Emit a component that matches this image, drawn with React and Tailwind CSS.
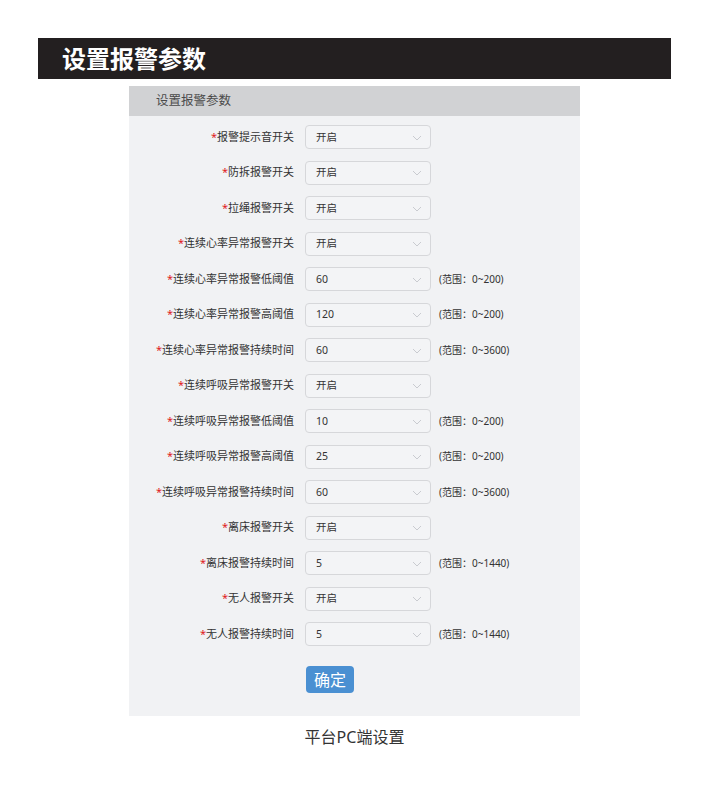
const ROWS = [
  { label: '报警提示音开关', value: '开启' },
  { label: '防拆报警开关', value: '开启' },
  { label: '拉绳报警开关', value: '开启' },
  { label: '连续心率异常报警开关', value: '开启' },
  { label: '连续心率异常报警低阈值', value: '60', range: '0~200' },
  { label: '连续心率异常报警高阈值', value: '120', range: '0~200' },
  { label: '连续心率异常报警持续时间', value: '60', range: '0~3600' },
  { label: '连续呼吸异常报警开关', value: '开启' },
  { label: '连续呼吸异常报警低阈值', value: '10', range: '0~200' },
  { label: '连续呼吸异常报警高阈值', value: '25', range: '0~200' },
  { label: '连续呼吸异常报警持续时间', value: '60', range: '0~3600' },
  { label: '离床报警开关', value: '开启' },
  { label: '离床报警持续时间', value: '5', range: '0~1440' },
  { label: '无人报警开关', value: '开启' },
  { label: '无人报警持续时间', value: '5', range: '0~1440' },
]

const font = { fontFamily: '"Noto Sans", "Noto Sans CJK SC", sans-serif' }

function Select({ value }) {
  return (
    <div className="w-[126px] h-6 shrink-0 rounded-[4px] border border-[#d6d7da] bg-[#f3f4f6] flex items-center justify-between pl-[10px] pr-[8px] pt-[1px]">
      <span className="text-[10.5px] text-[#333]">{value}</span>
      <svg width="10" height="6" viewBox="0 0 10 6" fill="none">
        <path d="M1 1l4 4 4-4" stroke="#c9cbd0" strokeWidth="1" />
      </svg>
    </div>
  )
}

export default function App() {
  return (
    <div className="w-[709px] h-[787px] bg-white pt-[38px]" style={font}>
      <div className="mx-[38px] h-[41px] bg-[#231f20] flex items-center pl-[24px]">
        <h1 className="text-[24px] font-bold text-white leading-none">设置报警参数</h1>
      </div>
      <div className="ml-[129px] w-[451px] mt-[7px] bg-[#f1f2f4]">
        <div className="h-[30px] bg-[#d1d2d4] flex items-center pl-[27px] text-[12.5px] text-[#4a4a4a]">
          设置报警参数
        </div>
        <div className="pt-[9px] flex flex-col gap-[11.5px]">
          {ROWS.map(r => (
            <div key={r.label} className="flex items-center h-6">
              <div className="w-[176px] text-right text-[11px] text-[#333] pr-[11px] whitespace-nowrap">
                <span className="text-[#e02020]">*</span>{r.label}
              </div>
              <Select value={r.value} />
              {r.range && (
                <span className="ml-[8px] text-[10px] text-[#333] whitespace-nowrap">(范围：{r.range})</span>
              )}
            </div>
          ))}
        </div>
        <div className="pl-[177px] pt-[20px] pb-[23px]">
          <button className="w-[48px] h-[27px] rounded-[4px] bg-[#4a90d2] text-white text-[16px] leading-none">
            确定
          </button>
        </div>
      </div>
      <p className="text-center text-[16px] text-[#333] mt-[9px]">平台PC端设置</p>
    </div>
  )
}
